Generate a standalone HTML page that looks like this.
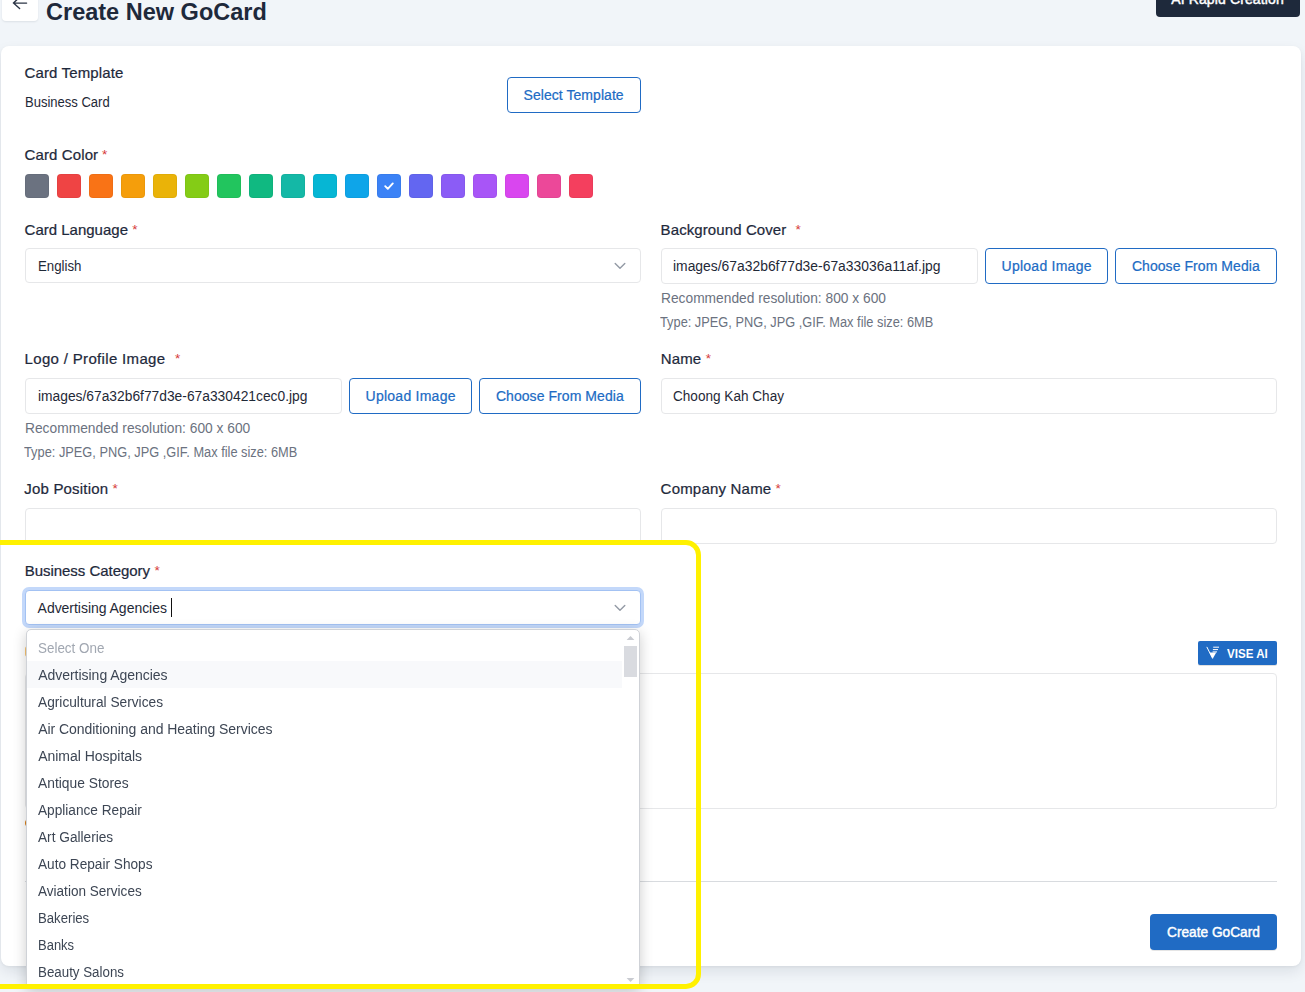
<!DOCTYPE html>
<html lang="en">
<head>
<meta charset="utf-8">
<title>Create New GoCard</title>
<style>
html,body{margin:0;padding:0}
body{width:1305px;height:992px;overflow:hidden;position:relative;background:#f1f5f9;font-family:"Liberation Sans", sans-serif;}
.t{position:absolute;white-space:pre;line-height:20px;font-size:14px}
.abs{position:absolute;box-sizing:border-box}
.card{left:1px;top:46px;width:1300px;height:920px;background:#fff;border-radius:8px;box-shadow:0 6px 14px rgba(15,23,42,.09),0 1px 3px rgba(15,23,42,.05)}
.inp{border:1px solid #e6e7e9;border-radius:4px;background:#fff}
.btn-o{border:1px solid #206bc4;border-radius:4px;background:#fff}
.btn-p{background:#206bc4;border-radius:4px;box-shadow:0 1px 0 rgba(0,0,0,.1)}
.sw{position:absolute;top:174px;width:24px;height:24px;border-radius:4px;box-shadow:inset 0 0 0 1px rgba(0,0,0,.04)}
svg{position:absolute;overflow:visible}
</style>
</head>
<body>
<!-- header -->
<div class="abs" style="left:2px;top:-15px;width:36px;height:36px;background:#fff;border-radius:4px;box-shadow:0 1px 2px rgba(15,23,42,.09)"></div>
<svg style="left:0;top:0" width="40" height="22"><path d="M26.6 3.1H13.6M19.3 -2.6L13.5 3.1L19.6 8.6" fill="none" stroke="#2b3445" stroke-width="1.4" stroke-linecap="round" stroke-linejoin="miter"/></svg>
<div class="abs" style="left:1156px;top:-19.4px;width:144px;height:36px;background:#1e293b;border-radius:4px"></div>

<!-- main card -->
<div class="abs card"></div>

<!-- row: template -->
<div class="abs btn-o" style="left:507px;top:77px;width:134px;height:36px"></div>
<i class="sw" style="left:25px;background:#6b7280"></i><i class="sw" style="left:57px;background:#ef4444"></i><i class="sw" style="left:89px;background:#f97316"></i><i class="sw" style="left:121px;background:#f59e0b"></i><i class="sw" style="left:153px;background:#eab308"></i><i class="sw" style="left:185px;background:#84cc16"></i><i class="sw" style="left:217px;background:#22c55e"></i><i class="sw" style="left:249px;background:#10b981"></i><i class="sw" style="left:281px;background:#14b8a6"></i><i class="sw" style="left:313px;background:#06b6d4"></i><i class="sw" style="left:345px;background:#0ea5e9"></i><i class="sw" style="left:377px;background:#3b82f6"></i><i class="sw" style="left:409px;background:#6366f1"></i><i class="sw" style="left:441px;background:#8b5cf6"></i><i class="sw" style="left:473px;background:#a855f7"></i><i class="sw" style="left:505px;background:#d946ef"></i><i class="sw" style="left:537px;background:#ec4899"></i><i class="sw" style="left:569px;background:#f43f5e"></i>
<svg style="left:377px;top:174px" width="24" height="24"><path d="M8.2 12.2L10.8 14.8L15.8 9.4" fill="none" stroke="#fff" stroke-width="1.9" stroke-linecap="round" stroke-linejoin="round"/></svg>

<!-- row: language / cover -->
<div class="abs inp" style="left:25px;top:248px;width:616px;height:35px"></div>
<svg style="left:614px;top:262px" width="12" height="8"><path d="M1.2 1.4L6 6.2L10.8 1.4" fill="none" stroke="#939aa5" stroke-width="1.4" stroke-linecap="round" stroke-linejoin="round"/></svg>
<div class="abs inp" style="left:661px;top:248px;width:317px;height:36px"></div>
<div class="abs btn-o" style="left:985px;top:248px;width:123px;height:36px"></div>
<div class="abs btn-o" style="left:1115px;top:248px;width:162px;height:36px"></div>

<!-- row: logo / name -->
<div class="abs inp" style="left:25px;top:378px;width:317px;height:36px"></div>
<div class="abs btn-o" style="left:349px;top:378px;width:123px;height:36px"></div>
<div class="abs btn-o" style="left:479px;top:378px;width:162px;height:36px"></div>
<div class="abs inp" style="left:661px;top:378px;width:616px;height:36px"></div>

<!-- row: job / company -->
<div class="abs inp" style="left:25px;top:508px;width:616px;height:36px"></div>
<div class="abs inp" style="left:661px;top:508px;width:616px;height:36px"></div>

<!-- business category (focused) -->
<div class="abs inp" style="left:25px;top:590px;width:616px;height:35px;border-color:#a3c2f3;box-shadow:0 0 0 3px #c3d8fa"></div>
<svg style="left:614px;top:604px" width="12" height="8"><path d="M1.2 1.4L6 6.2L10.8 1.4" fill="none" stroke="#939aa5" stroke-width="1.4" stroke-linecap="round" stroke-linejoin="round"/></svg>
<div class="abs" style="left:171px;top:598px;width:1px;height:19px;background:#111"></div>

<!-- description area (partly behind dropdown) -->
<div class="abs" style="left:25px;top:646px;width:11px;height:11px;border-radius:3px;background:#f8c471"></div>
<div class="abs btn-p" style="left:1198px;top:641px;width:79px;height:24px;border-radius:2px;box-shadow:0 1px 0 rgba(0,0,0,.12)"></div>
<svg style="left:1198px;top:641px" width="30" height="24"><path d="M8.8 5.9L14.6 17.4" stroke="#fff" stroke-width="1" fill="none"/><path d="M11.4 11.6H18.2L14.7 17.8Z" fill="#fff"/><path d="M15.2 6.2H21M14.9 8.6H20M14.6 10.9H19" stroke="#fff" stroke-width="1" fill="none"/></svg>
<div class="abs inp" style="left:25px;top:673px;width:1252px;height:136px"></div>
<div class="abs" style="left:25px;top:818px;width:10px;height:10px;border-radius:5px;background:#d97706"></div>
<div class="abs" style="left:25px;top:881px;width:1252px;height:1px;background:#d8dbdf"></div>
<div class="abs btn-p" style="left:1150px;top:914px;width:127px;height:36px"></div>

<span class="t" style="left:46.40px;top:1.50px;font-size:24px;color:#1e293b;font-weight:700;transform:scaleX(0.9796);transform-origin:0 0;">Create New GoCard</span>
<span class="t" style="left:1171.20px;top:-11.00px;font-size:14px;color:#ffffff;letter-spacing:0.128px;-webkit-text-stroke:0.45px #ffffff;">AI Rapid Creation</span>
<span class="t" style="left:24.60px;top:62.50px;font-size:15px;color:#1e293b;letter-spacing:0.117px;-webkit-text-stroke:0.22px #1e293b;">Card Template</span>
<span class="t" style="left:24.70px;top:92.00px;font-size:14px;color:#1f2937;transform:scaleX(0.9303);transform-origin:0 0;">Business Card</span>
<span class="t" style="left:523.60px;top:85.00px;font-size:14px;color:#206bc4;letter-spacing:0.049px;-webkit-text-stroke:0.22px #206bc4;">Select Template</span>
<span class="t" style="left:24.60px;top:144.50px;font-size:15px;color:#1e293b;letter-spacing:0.107px;-webkit-text-stroke:0.22px #1e293b;">Card Color</span>
<span class="t" style="left:101.90px;top:144.50px;font-size:13.5px;color:#d63939;">*</span>
<span class="t" style="left:24.60px;top:219.50px;font-size:15px;color:#1e293b;letter-spacing:-0.002px;-webkit-text-stroke:0.22px #1e293b;">Card Language</span>
<span class="t" style="left:132.20px;top:219.50px;font-size:13.5px;color:#d63939;">*</span>
<span class="t" style="left:660.60px;top:219.50px;font-size:15px;color:#1e293b;letter-spacing:0.098px;-webkit-text-stroke:0.22px #1e293b;">Background Cover</span>
<span class="t" style="left:795.60px;top:219.50px;font-size:13.5px;color:#d63939;">*</span>
<span class="t" style="left:37.80px;top:256.00px;font-size:14px;color:#1f2937;transform:scaleX(0.9473);transform-origin:0 0;">English</span>
<span class="t" style="left:673.40px;top:256.00px;font-size:14px;color:#1f2937;transform:scaleX(0.9912);transform-origin:0 0;">images/67a32b6f77d3e-67a33036a11af.jpg</span>
<span class="t" style="left:1001.60px;top:256.00px;font-size:14px;color:#206bc4;letter-spacing:0.244px;-webkit-text-stroke:0.22px #206bc4;">Upload Image</span>
<span class="t" style="left:1131.90px;top:256.00px;font-size:14px;color:#206bc4;letter-spacing:0.063px;-webkit-text-stroke:0.22px #206bc4;">Choose From Media</span>
<span class="t" style="left:660.60px;top:288.00px;font-size:14px;color:#6b7280;transform:scaleX(0.9833);transform-origin:0 0;">Recommended resolution: 800 x 600</span>
<span class="t" style="left:660.40px;top:312.00px;font-size:14px;color:#6b7280;transform:scaleX(0.9145);transform-origin:0 0;">Type: JPEG, PNG, JPG ,GIF. Max file size: 6MB</span>
<span class="t" style="left:24.60px;top:348.50px;font-size:15px;color:#1e293b;letter-spacing:0.328px;-webkit-text-stroke:0.22px #1e293b;">Logo / Profile Image</span>
<span class="t" style="left:174.90px;top:348.50px;font-size:13.5px;color:#d63939;">*</span>
<span class="t" style="left:660.70px;top:348.50px;font-size:15px;color:#1e293b;letter-spacing:0.171px;-webkit-text-stroke:0.22px #1e293b;">Name</span>
<span class="t" style="left:705.80px;top:348.50px;font-size:13.5px;color:#d63939;">*</span>
<span class="t" style="left:37.50px;top:386.00px;font-size:14px;color:#1f2937;transform:scaleX(0.9860);transform-origin:0 0;">images/67a32b6f77d3e-67a330421cec0.jpg</span>
<span class="t" style="left:365.60px;top:386.00px;font-size:14px;color:#206bc4;letter-spacing:0.244px;-webkit-text-stroke:0.22px #206bc4;">Upload Image</span>
<span class="t" style="left:495.90px;top:386.00px;font-size:14px;color:#206bc4;letter-spacing:0.063px;-webkit-text-stroke:0.22px #206bc4;">Choose From Media</span>
<span class="t" style="left:673.20px;top:386.00px;font-size:14px;color:#1f2937;transform:scaleX(0.9701);transform-origin:0 0;">Choong Kah Chay</span>
<span class="t" style="left:24.60px;top:418.00px;font-size:14px;color:#6b7280;transform:scaleX(0.9846);transform-origin:0 0;">Recommended resolution: 600 x 600</span>
<span class="t" style="left:24.40px;top:442.00px;font-size:14px;color:#6b7280;transform:scaleX(0.9148);transform-origin:0 0;">Type: JPEG, PNG, JPG ,GIF. Max file size: 6MB</span>
<span class="t" style="left:24.30px;top:478.50px;font-size:15px;color:#1e293b;letter-spacing:0.182px;-webkit-text-stroke:0.22px #1e293b;">Job Position</span>
<span class="t" style="left:112.50px;top:478.50px;font-size:13.5px;color:#d63939;">*</span>
<span class="t" style="left:660.60px;top:478.50px;font-size:15px;color:#1e293b;letter-spacing:0.201px;-webkit-text-stroke:0.22px #1e293b;">Company Name</span>
<span class="t" style="left:775.40px;top:478.50px;font-size:13.5px;color:#d63939;">*</span>
<span class="t" style="left:24.70px;top:560.50px;font-size:15px;color:#1e293b;letter-spacing:-0.036px;-webkit-text-stroke:0.22px #1e293b;">Business Category</span>
<span class="t" style="left:154.50px;top:560.50px;font-size:13.5px;color:#d63939;">*</span>
<span class="t" style="left:37.60px;top:598.00px;font-size:14px;color:#1f2937;letter-spacing:-0.033px;">Advertising Agencies</span>
<span class="t" style="left:1226.80px;top:644.00px;font-size:12.5px;color:#ffffff;font-weight:700;transform:scaleX(0.9250);transform-origin:0 0;">VISE AI</span>
<span class="t" style="left:1166.60px;top:922.00px;font-size:14px;color:#ffffff;transform:scaleX(0.9775);transform-origin:0 0;-webkit-text-stroke:0.45px #ffffff;">Create GoCard</span>

<!-- dropdown -->
<div class="abs" style="left:0;top:0;width:1305px;height:992px;will-change:transform">
<div class="abs" style="left:26px;top:628.5px;width:614px;height:360px;background:#fff;border:1px solid #cfd2d7;border-radius:5px;box-shadow:0 3px 14px rgba(0,0,0,.2)"></div>
<div class="abs" style="left:27px;top:661px;width:595px;height:27px;background:#f8f9fb"></div>
<div class="abs" style="left:624px;top:646px;width:13px;height:31px;background:#d9dbe0"></div>
<svg style="left:626px;top:635px" width="9" height="6"><path d="M0.6 5L4.5 1L8.4 5Z" fill="#c9cbd1"/></svg>
<svg style="left:626px;top:977px" width="9" height="6"><path d="M0.6 1L4.5 5L8.4 1Z" fill="#c9cbd1"/></svg>
<span class="t" style="left:38.20px;top:638.00px;font-size:14px;color:#a1a7b1;transform:scaleX(0.9586);transform-origin:0 0;">Select One</span>
<span class="t" style="left:38.20px;top:665.00px;font-size:14px;color:#3d4654;letter-spacing:-0.028px;">Advertising Agencies</span>
<span class="t" style="left:38.20px;top:692.00px;font-size:14px;color:#3d4654;transform:scaleX(0.9796);transform-origin:0 0;">Agricultural Services</span>
<span class="t" style="left:38.20px;top:719.00px;font-size:14px;color:#3d4654;letter-spacing:-0.044px;">Air Conditioning and Heating Services</span>
<span class="t" style="left:38.20px;top:746.00px;font-size:14px;color:#3d4654;letter-spacing:-0.023px;">Animal Hospitals</span>
<span class="t" style="left:38.20px;top:773.00px;font-size:14px;color:#3d4654;transform:scaleX(0.9865);transform-origin:0 0;">Antique Stores</span>
<span class="t" style="left:38.20px;top:800.00px;font-size:14px;color:#3d4654;transform:scaleX(0.9744);transform-origin:0 0;">Appliance Repair</span>
<span class="t" style="left:38.20px;top:827.00px;font-size:14px;color:#3d4654;transform:scaleX(0.9762);transform-origin:0 0;">Art Galleries</span>
<span class="t" style="left:38.20px;top:854.00px;font-size:14px;color:#3d4654;transform:scaleX(0.9742);transform-origin:0 0;">Auto Repair Shops</span>
<span class="t" style="left:38.20px;top:881.00px;font-size:14px;color:#3d4654;transform:scaleX(0.9679);transform-origin:0 0;">Aviation Services</span>
<span class="t" style="left:38.20px;top:908.00px;font-size:14px;color:#3d4654;transform:scaleX(0.9400);transform-origin:0 0;">Bakeries</span>
<span class="t" style="left:38.20px;top:935.00px;font-size:14px;color:#3d4654;transform:scaleX(0.9275);transform-origin:0 0;">Banks</span>
<span class="t" style="left:38.20px;top:962.00px;font-size:14px;color:#3d4654;transform:scaleX(0.9524);transform-origin:0 0;">Beauty Salons</span>
</div>

<!-- highlight annotation -->
<div class="abs" style="left:-30px;top:540px;width:731px;height:449px;border:5px solid #fff100;border-radius:15px"></div>
</body>
</html>
